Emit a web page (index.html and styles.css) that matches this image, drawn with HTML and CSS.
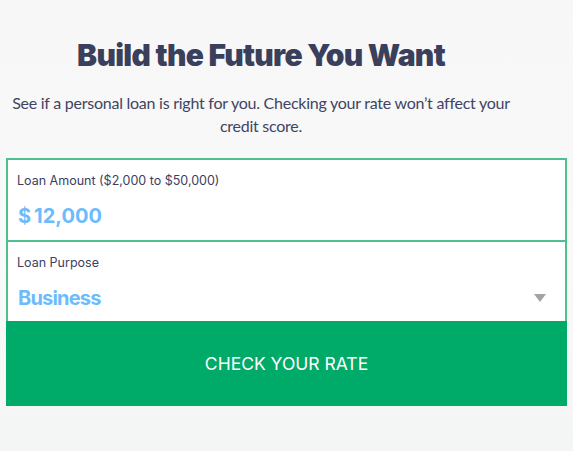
FILE: index.html
```html
<!DOCTYPE html>
<html lang="en">
<head>
<meta charset="utf-8">
<title>Build the Future You Want</title>
<link rel="stylesheet" href="styles.css">
</head>
<body>
<main class="page">
  <header class="hero">
    <h1 class="title">Build the Future You Want</h1>
    <p class="subtitle">See if a personal loan is right for you. Checking your rate won’t affect your credit score.</p>
  </header>
  <form class="card">
    <div class="field">
      <label class="label">Loan Amount ($2,000 to $50,000)</label>
      <div class="value"><span class="currency">$</span>12,000</div>
    </div>
    <div class="field field-select">
      <label class="label">Loan Purpose</label>
      <div class="select-row">
        <span class="value value-select">Business</span>
        <svg class="caret" width="12" height="8" viewBox="0 0 12 8"><path d="M0 0H12L6 8Z" fill="#a3a3a3"/></svg>
      </div>
    </div>
    <button type="button" class="cta">CHECK YOUR RATE</button>
  </form>
</main>
</body>
</html>
```
FILE: styles.css
```css
* { box-sizing: border-box; }
html, body { margin: 0; padding: 0; }
body {
  width: 573px;
  height: 451px;
  overflow: hidden;
  background: linear-gradient(180deg, #f7f7f7 0%, #f9f9f9 60%, #f4f5f5 100%);
  font-family: "Inter", "Lato", sans-serif;
  color: #3b4060;
}
.page {
  padding: 0 6px;
}
.hero {
  text-align: center;
  padding-top: 35px;
  margin-right: 51px;
}
.title {
  margin: 0;
  font-size: 30px;
  line-height: 40px;
  font-weight: 900;
  letter-spacing: -0.7px;
  color: #3a3f5b;
}
.subtitle {
  margin: 16px -4px 0;
  font-family: "Lato", sans-serif;
  font-size: 16px;
  line-height: 23px;
  font-weight: 400;
  letter-spacing: -0.25px;
  color: #3f4462;
}
.card {
  margin-top: 21px;
  border: 2px solid #4cc08e;
  background: #fff;
  display: flex;
  flex-direction: column;
}
.field {
  height: 80px;
  padding: 13px 9px 0;
  display: flex;
  flex-direction: column;
}
.field + .field {
  border-top: 2px solid #4cc08e;
  height: 81px;
}
.label {
  font-size: 12.5px;
  line-height: 16px;
  color: #3b4060;
}
.value {
  margin-top: 13px;
  font-size: 20px;
  line-height: 28px;
  font-weight: 700;
  color: #6cbcfc;
  padding-left: 1px;
}
.value-select { letter-spacing: -0.8px; }
.currency { margin-right: 3px; }
.select-row {
  display: flex;
  align-items: center;
  justify-content: space-between;
  margin-top: 13px;
  padding-right: 10px;
}
.select-row .value { margin-top: 0; }
.caret { display: block; }
.cta {
  margin: 0 -2px -2px;
  height: 85px;
  border: 0;
  background: #00aa68;
  color: #fff;
  font-family: inherit;
  font-size: 17.5px;
  font-weight: 400;
}
```
